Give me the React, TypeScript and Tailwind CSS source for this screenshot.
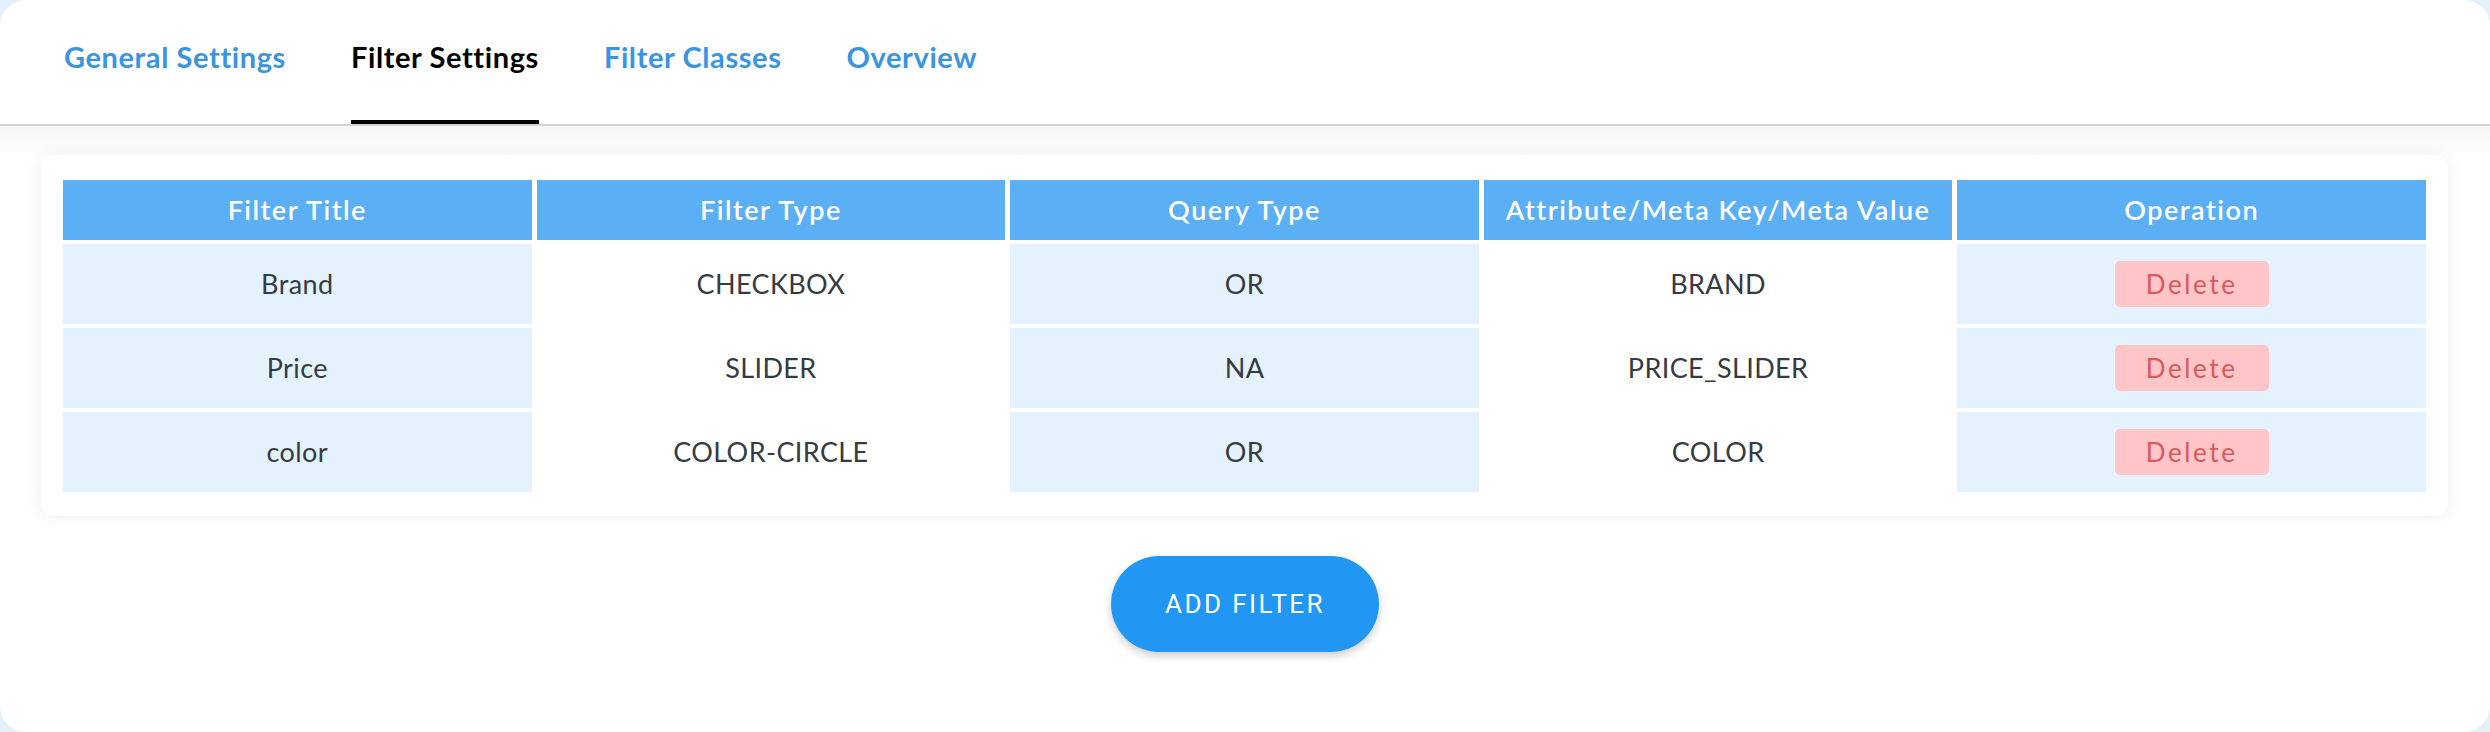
import React from 'react';

const tabs = ['General Settings', 'Filter Settings', 'Filter Classes', 'Overview'];

const columns = ['Filter Title', 'Filter Type', 'Query Type', 'Attribute/Meta Key/Meta Value', 'Operation'];

const filters = [
  { title: 'Brand', type: 'CHECKBOX', query: 'OR', key: 'BRAND' },
  { title: 'Price', type: 'SLIDER', query: 'NA', key: 'PRICE_SLIDER' },
  { title: 'color', type: 'COLOR-CIRCLE', query: 'OR', key: 'COLOR' },
];

function Tabs({ active }: { active: string }) {
  return (
    <div className="flex gap-[65px] pl-[64px] h-[124px]">
      {tabs.map((tab) => {
        const isActive = tab === active;
        return (
          <div key={tab} className="flex flex-col h-full">
            <span
              className={`pt-[37px] leading-[40px] text-[29px] tracking-[0.6px] font-bold whitespace-nowrap ${
                isActive ? 'text-black' : 'text-[#3b94df]'
              }`}
            >
              {tab}
            </span>
            {isActive && <div className="mt-auto h-[4px] bg-black" />}
          </div>
        );
      })}
    </div>
  );
}

function Cell({ shaded, children }: { shaded: boolean; children: React.ReactNode }) {
  return (
    <div
      className={`h-[80px] flex items-center justify-center text-[27px] tracking-[0.4px] text-[#353b41] ${
        shaded ? 'bg-[#e3f2fd]' : 'bg-white'
      }`}
    >
      {children}
    </div>
  );
}

export default function App() {
  return (
    <div className="w-[2490px] h-[732px] bg-[#e4f1fb] font-['Lato',sans-serif]">
      <div className="h-full bg-white rounded-[26px] overflow-hidden">
        <Tabs active="Filter Settings" />
        <div className="h-[2px] bg-[#d3d3d3]" />

        <div className="bg-gradient-to-b from-[#f5f5f5] to-white to-[30px] pt-[29px]">
          <div className="ml-[41px] mr-[42px] bg-white rounded-[12px] shadow-[0_0_18px_rgba(0,0,0,0.07)] px-[22px] pt-[25px] pb-[24px]">
            <div className="grid grid-cols-5 gap-x-[5px] gap-y-[4px]">
              {columns.map((col) => (
                <div
                  key={col}
                  className="h-[60px] flex items-center justify-center bg-[#5aaff5] text-white text-[27px] tracking-[1.5px] font-semibold whitespace-nowrap"
                >
                  {col}
                </div>
              ))}
              {filters.map((f) => (
                <React.Fragment key={f.title}>
                  <Cell shaded>{f.title}</Cell>
                  <Cell shaded={false}>{f.type}</Cell>
                  <Cell shaded>{f.query}</Cell>
                  <Cell shaded={false}>{f.key}</Cell>
                  <Cell shaded>
                    <button className="w-[154px] h-[46px] rounded-[5px] bg-[#ffc5c7] text-[#d9595d] text-[26px] tracking-[2.6px]">
                      Delete
                    </button>
                  </Cell>
                </React.Fragment>
              ))}
            </div>
          </div>
        </div>

        <div className="flex justify-center pt-[40px]">
          <button className="w-[268px] h-[96px] rounded-full bg-[#2196f3] text-white text-[26px] font-['Roboto',sans-serif] tracking-[2.4px] shadow-[0_4px_8px_rgba(0,0,0,0.2)]">
            ADD FILTER
          </button>
        </div>
      </div>
    </div>
  );
}
